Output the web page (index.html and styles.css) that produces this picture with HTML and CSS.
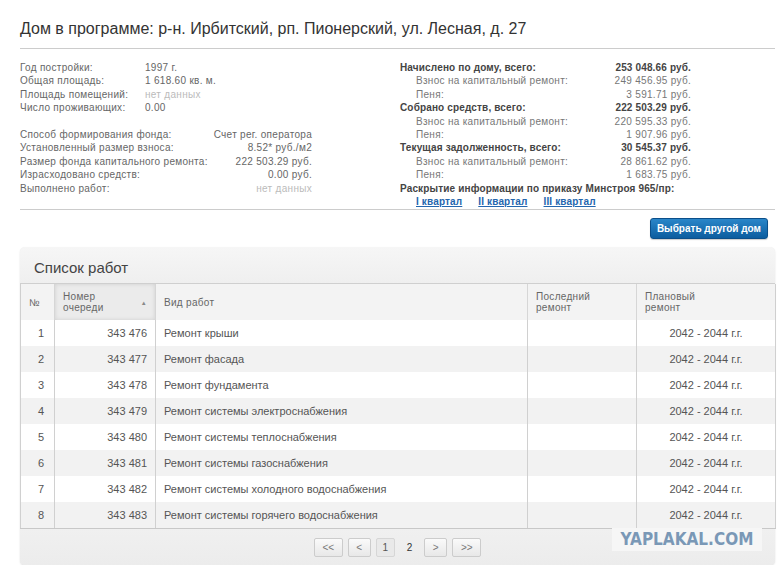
FILE: index.html
```html
<!DOCTYPE html>
<html lang="ru">
<head>
<meta charset="utf-8">
<title>Дом в программе</title>
<link rel="stylesheet" href="styles.css">
</head>
<body>
<div class="page">
  <h1 class="title">Дом в программе: р-н. Ирбитский, рп. Пионерский, ул. Лесная, д. 27</h1>

  <div class="info">
    <div class="info-left">
      <div class="grid g1">
        <span>Год постройки:</span><span>1997 г.</span>
        <span>Общая площадь:</span><span>1 618.60 кв. м.</span>
        <span>Площадь помещений:</span><span class="na">нет данных</span>
        <span>Число проживающих:</span><span>0.00</span>
      </div>
      <div class="grid g2">
        <span>Способ формирования фонда:</span><span class="r">Счет рег. оператора</span>
        <span>Установленный размер взноса:</span><span class="r">8.52* руб./м2</span>
        <span>Размер фонда капитального ремонта:</span><span class="r">222 503.29 руб.</span>
        <span>Израсходовано средств:</span><span class="r">0.00 руб.</span>
        <span>Выполнено работ:</span><span class="r na">нет данных</span>
      </div>
    </div>
    <div class="info-right">
      <div class="grid g3">
        <span class="b">Начислено по дому, всего:</span><span class="r b">253 048.66 руб.</span>
        <span class="ind">Взнос на капитальный ремонт:</span><span class="r">249 456.95 руб.</span>
        <span class="ind">Пеня:</span><span class="r">3 591.71 руб.</span>
        <span class="b">Собрано средств, всего:</span><span class="r b">222 503.29 руб.</span>
        <span class="ind">Взнос на капитальный ремонт:</span><span class="r">220 595.33 руб.</span>
        <span class="ind">Пеня:</span><span class="r">1 907.96 руб.</span>
        <span class="b">Текущая задолженность, всего:</span><span class="r b">30 545.37 руб.</span>
        <span class="ind">Взнос на капитальный ремонт:</span><span class="r">28 861.62 руб.</span>
        <span class="ind">Пеня:</span><span class="r">1 683.75 руб.</span>
      </div>
      <div class="b disclosure">Раскрытие информации по приказу Минстроя 965/пр:</div>
      <div class="links">
        <a href="#">I квартал</a>
        <a href="#">II квартал</a>
        <a href="#">III квартал</a>
      </div>
    </div>
  </div>

  <div class="actions">
    <button class="btn-primary" type="button">Выбрать другой дом</button>
  </div>

  <div class="panel">
    <div class="panel-head">Список работ</div>
    <table class="works">
      <colgroup>
        <col class="c-num"><col class="c-queue"><col class="c-kind"><col class="c-last"><col class="c-plan">
      </colgroup>
      <thead>
        <tr>
          <th class="center">№</th>
          <th class="sorted"><span class="th-sort">Номер<br>очереди<span class="arrow">▲</span></span></th>
          <th>Вид работ</th>
          <th>Последний<br>ремонт</th>
          <th>Плановый<br>ремонт</th>
        </tr>
      </thead>
      <tbody>
        <tr><td class="n">1</td><td class="r">343 476</td><td>Ремонт крыши</td><td></td><td class="center">2042 - 2044 г.г.</td></tr>
        <tr><td class="n">2</td><td class="r">343 477</td><td>Ремонт фасада</td><td></td><td class="center">2042 - 2044 г.г.</td></tr>
        <tr><td class="n">3</td><td class="r">343 478</td><td>Ремонт фундамента</td><td></td><td class="center">2042 - 2044 г.г.</td></tr>
        <tr><td class="n">4</td><td class="r">343 479</td><td>Ремонт системы электроснабжения</td><td></td><td class="center">2042 - 2044 г.г.</td></tr>
        <tr><td class="n">5</td><td class="r">343 480</td><td>Ремонт системы теплоснабжения</td><td></td><td class="center">2042 - 2044 г.г.</td></tr>
        <tr><td class="n">6</td><td class="r">343 481</td><td>Ремонт системы газоснабжения</td><td></td><td class="center">2042 - 2044 г.г.</td></tr>
        <tr><td class="n">7</td><td class="r">343 482</td><td>Ремонт системы холодного водоснабжения</td><td></td><td class="center">2042 - 2044 г.г.</td></tr>
        <tr><td class="n">8</td><td class="r">343 483</td><td>Ремонт системы горячего водоснабжения</td><td></td><td class="center">2042 - 2044 г.г.</td></tr>
      </tbody>
    </table>
    <div class="panel-foot">
      <div class="pager">
        <span class="pg w">&lt;&lt;</span>
        <span class="pg">&lt;</span>
        <span class="pg active">1</span>
        <span class="pg plain">2</span>
        <span class="pg">&gt;</span>
        <span class="pg w">&gt;&gt;</span>
      </div>
      <div class="watermark">YAPLAKAL.COM</div>
    </div>
  </div>
</div>
</body>
</html>
```

FILE: styles.css
```css
* { box-sizing: border-box; }
html, body { margin: 0; padding: 0; background: #fff; }
body {
  font-family: "Liberation Sans", Arial, sans-serif;
  color: #666;
}
.page {
  width: 755px;
  margin-left: 20px;
}
.title {
  margin: 0;
  padding: 18px 0 9px;
  font-size: 16px;
  line-height: 21px;
  font-weight: normal;
  color: #333;
  border-bottom: 1px solid #ccc;
}
.info {
  display: flex;
  font-size: 10px;
  line-height: 13.4px;
  letter-spacing: 0.3px;
  padding: 12px 0 1px;
  border-bottom: 1px solid #ccc;
}
.info-left { width: 380px; }
.info-right { width: 291px; }
.grid { display: grid; }
.g1 { grid-template-columns: 125px auto; }
.g2 { grid-template-columns: auto auto; width: 292px; margin-top: 13.4px; }
.g3 { grid-template-columns: auto auto; }
.r { text-align: right; }
.na { color: #bbb; }
.b { font-weight: bold; color: #444; letter-spacing: 0.15px; }
.ind { padding-left: 16px; }
.info-right .r:not(.b), .info-right .ind { color: #777; }
.links { padding-left: 16px; display: flex; gap: 16px; }
.links a {
  color: #2466ae;
  font-weight: bold;
  letter-spacing: 0.15px;
  text-decoration: underline;
}
.actions {
  display: flex;
  justify-content: flex-end;
  padding: 8px 7px 0 0;
}
.btn-primary {
  height: 21px;
  padding: 0 6px;
  border: 1px solid #0b4f8a;
  border-radius: 3px;
  background: linear-gradient(#2a86c9, #0c5d9f);
  color: #fff;
  font-family: "Liberation Sans", Arial, sans-serif;
  font-size: 10px;
  font-weight: bold;
  line-height: 19px;
  box-shadow: 0 1px 1px rgba(0,0,0,0.2);
}
.panel {
  position: relative;
  margin-top: 8px;
  background: #f0f0f0;
  border-radius: 5px;
  box-shadow: 0 1px 2px rgba(0,0,0,0.12);
}
.panel-head {
  height: 37px;
  padding: 12px 14px 0;
  font-size: 15px;
  line-height: 18px;
  color: #444;
  background: linear-gradient(#f6f6f6, #efefef);
  border-radius: 5px 5px 0 0;
  border-bottom: 1px solid #cfcfcf;
}
.works {
  width: 755px;
  table-layout: fixed;
  border-collapse: collapse;
  font-size: 11px;
  color: #555;
  background: #fff;
}
.c-num { width: 34px; }
.c-queue { width: 101px; }
.c-kind { width: 372px; }
.c-last { width: 109px; }
.c-plan { width: 139px; }
.works th {
  height: 36px;
  padding: 0 8px;
  font-size: 10px;
  line-height: 11px;
  font-weight: normal;
  text-align: left;
  color: #666;
  letter-spacing: 0.3px;
  background: #f3f3f3;
  border-left: 1px solid #d6d6d6;
  vertical-align: middle;
}
.works th:first-child { border-left: 1px solid #cfcfcf; }
.works th:last-child { border-right: 1px solid #cfcfcf; }
.works th.sorted {
  background: #ebebeb;
  box-shadow: inset 0 0 4px rgba(0,0,0,0.12);
}
.th-sort { display: block; position: relative; }
.arrow {
  position: absolute;
  right: 0;
  top: 7px;
  font-size: 6px;
  color: #888;
}
.works td {
  height: 26px;
  padding: 0 8px;
  border-left: 1px solid #d0d0d0;
  white-space: nowrap;
}
.works td:last-child { border-right: 1px solid #d0d0d0; }
.works td.n { text-align: right; padding-right: 10px; }
.works tbody tr:nth-child(even) td { background: #f2f2f2; }
.works tbody tr:last-child td { border-bottom: 1px solid #c8c8c8; }
.center { text-align: center; }
.panel-foot {
  height: 36px;
  padding-top: 9px;
  display: flex;
  justify-content: center;
  background: linear-gradient(#f0f0f0, #ececec);
  border-radius: 0 0 5px 5px;
}
.pager { display: flex; gap: 5px; }
.pg {
  height: 19px;
  min-width: 23px;
  padding: 0 6px;
  border: 1px solid #ccc;
  border-radius: 2px;
  background: linear-gradient(#fafafa, #e8e8e8);
  font-size: 10px;
  line-height: 17px;
  color: #777;
  text-align: center;
}
.pg.w { min-width: 29px; }
.pg.active {
  min-width: 19px;
  padding: 0 4px;
  background: #e9e9e9;
  border-color: #d6d6d6;
  color: #555;
}
.pg.plain {
  min-width: 18px;
  border-color: transparent;
  background: none;
  color: #333;
}
.watermark {
  position: absolute;
  left: 592px;
  bottom: 14px;
  width: 150px;
  height: 23px;
  background: #f6f6f6;
  font-family: "DejaVu Sans Condensed", "DejaVu Sans", sans-serif;
  font-stretch: condensed;
  font-weight: 900;
  font-size: 17px;
  line-height: 23px;
  color: #7a98b6;
  text-align: center;
}
```
